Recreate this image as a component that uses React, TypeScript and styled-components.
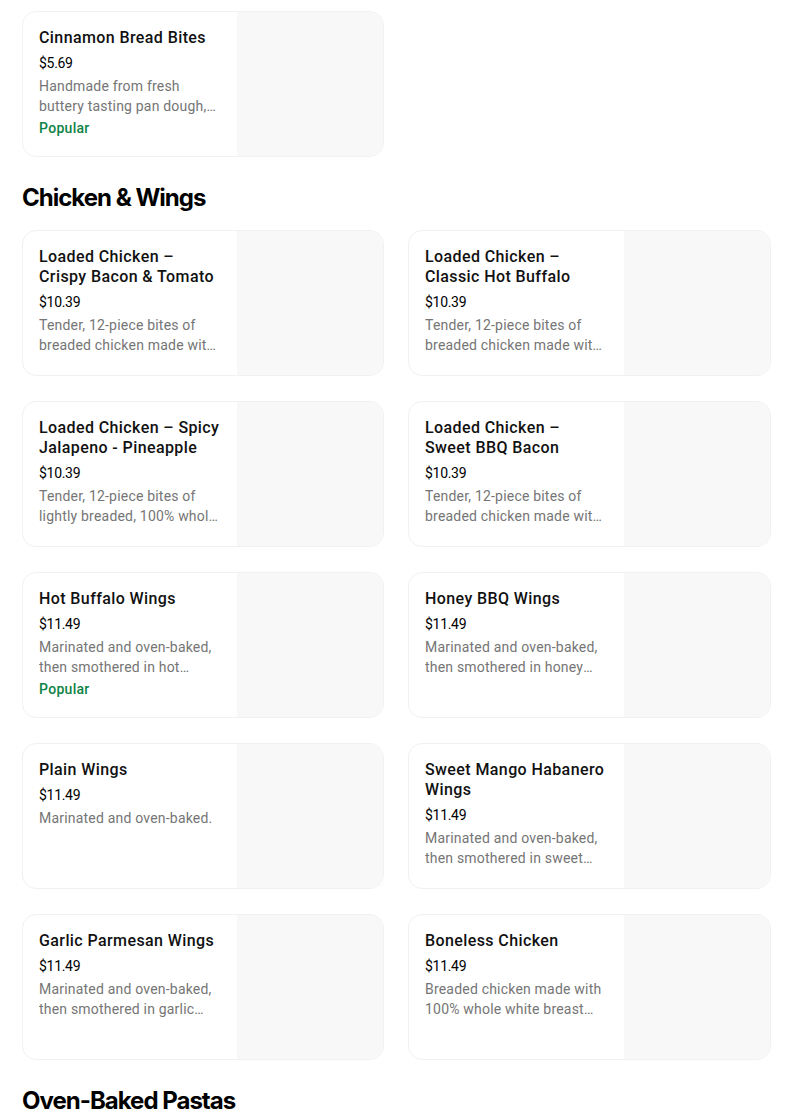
import styled, { createGlobalStyle } from "styled-components";

const GlobalStyle = createGlobalStyle`
  body {
    margin: 0;
    background: #ffffff;
    font-family: Roboto, "Noto Sans", Arial, sans-serif;
    color: #000000;
  }
`;

type Item = {
  name: string;
  price: string;
  desc: string;
  popular?: boolean;
};

const sections: { title?: string; items: Item[] }[] = [
  {
    items: [
      {
        name: "Cinnamon Bread Bites",
        price: "$5.69",
        desc: "Handmade from fresh buttery tasting pan dough, baked and topped with cinnamon sugar.",
        popular: true,
      },
    ],
  },
  {
    title: "Chicken & Wings",
    items: [
      {
        name: "Loaded Chicken – Crispy Bacon & Tomato",
        price: "$10.39",
        desc: "Tender, 12-piece bites of breaded chicken made with 100% whole breast meat.",
      },
      {
        name: "Loaded Chicken – Classic Hot Buffalo",
        price: "$10.39",
        desc: "Tender, 12-piece bites of breaded chicken made with 100% whole breast meat.",
      },
      {
        name: "Loaded Chicken – Spicy Jalapeno - Pineapple",
        price: "$10.39",
        desc: "Tender, 12-piece bites of lightly breaded, 100% whole breast meat chicken.",
      },
      {
        name: "Loaded Chicken – Sweet BBQ Bacon",
        price: "$10.39",
        desc: "Tender, 12-piece bites of breaded chicken made with 100% whole breast meat.",
      },
      {
        name: "Hot Buffalo Wings",
        price: "$11.49",
        desc: "Marinated and oven-baked, then smothered in hot buffalo sauce.",
        popular: true,
      },
      {
        name: "Honey BBQ Wings",
        price: "$11.49",
        desc: "Marinated and oven-baked, then smothered in honey BBQ sauce.",
      },
      {
        name: "Plain Wings",
        price: "$11.49",
        desc: "Marinated and oven-baked.",
      },
      {
        name: "Sweet Mango Habanero Wings",
        price: "$11.49",
        desc: "Marinated and oven-baked, then smothered in sweet mango habanero sauce.",
      },
      {
        name: "Garlic Parmesan Wings",
        price: "$11.49",
        desc: "Marinated and oven-baked, then smothered in garlic parmesan sauce.",
      },
      {
        name: "Boneless Chicken",
        price: "$11.49",
        desc: "Breaded chicken made with 100% whole white breast meat, baked in the oven.",
      },
    ],
  },
  { title: "Oven-Baked Pastas", items: [] },
];

export default function App() {
  return (
    <>
      <GlobalStyle />
      <Page>
        {sections.map((s, i) => (
          <Section key={i}>
            {s.title && <Heading>{s.title}</Heading>}
            {s.items.length > 0 && (
              <Grid>
                {s.items.map((it) => (
                  <Card key={it.name}>
                    <Info>
                      <Name>{it.name}</Name>
                      <Price>{it.price}</Price>
                      <Desc>{it.desc}</Desc>
                      {it.popular && <Badge>Popular</Badge>}
                    </Info>
                    <Thumb />
                  </Card>
                ))}
              </Grid>
            )}
          </Section>
        ))}
      </Page>
    </>
  );
}

const Page = styled.div`
  padding: 11px 0 0 22px;
  display: flex;
  flex-direction: column;
  gap: 25px;
`;

const Section = styled.section`
  display: flex;
  flex-direction: column;
  gap: 16px;
`;

const Heading = styled.h2`
  margin: 0;
  font-family: Inter, "Noto Sans", Arial, sans-serif;
  font-size: 24px;
  line-height: 32px;
  font-weight: 700;
  letter-spacing: -1px;
`;

const Grid = styled.div`
  display: grid;
  grid-template-columns: 362px 363px;
  column-gap: 24px;
  row-gap: 25px;
`;

const Card = styled.div`
  display: flex;
  height: 146px;
  border: 1px solid #f1f1f1;
  border-radius: 14px;
  overflow: hidden;
  background: #ffffff;
  box-sizing: border-box;
`;

const Info = styled.div`
  flex: 1;
  min-width: 0;
  padding: 16px 16px 0 16px;
  display: flex;
  flex-direction: column;
`;

const Name = styled.div`
  font-size: 16px;
  line-height: 20px;
  font-weight: 500;
  letter-spacing: 0.4px;
  color: #111111;
`;

const Price = styled.div`
  margin-top: 5px;
  font-size: 14px;
  line-height: 20px;
  color: #000000;
  letter-spacing: -0.3px;
`;

const Desc = styled.div`
  margin-top: 3px;
  font-size: 14px;
  line-height: 20px;
  letter-spacing: 0.2px;
  color: #757575;
  display: -webkit-box;
  -webkit-line-clamp: 2;
  -webkit-box-orient: vertical;
  overflow: hidden;
`;

const Badge = styled.div`
  margin-top: 2px;
  font-size: 14px;
  line-height: 20px;
  font-weight: 500;
  letter-spacing: 0.3px;
  color: #0e8345;
`;

const Thumb = styled.div`
  width: 146px;
  flex-shrink: 0;
  background: #f8f8f8;
`;
